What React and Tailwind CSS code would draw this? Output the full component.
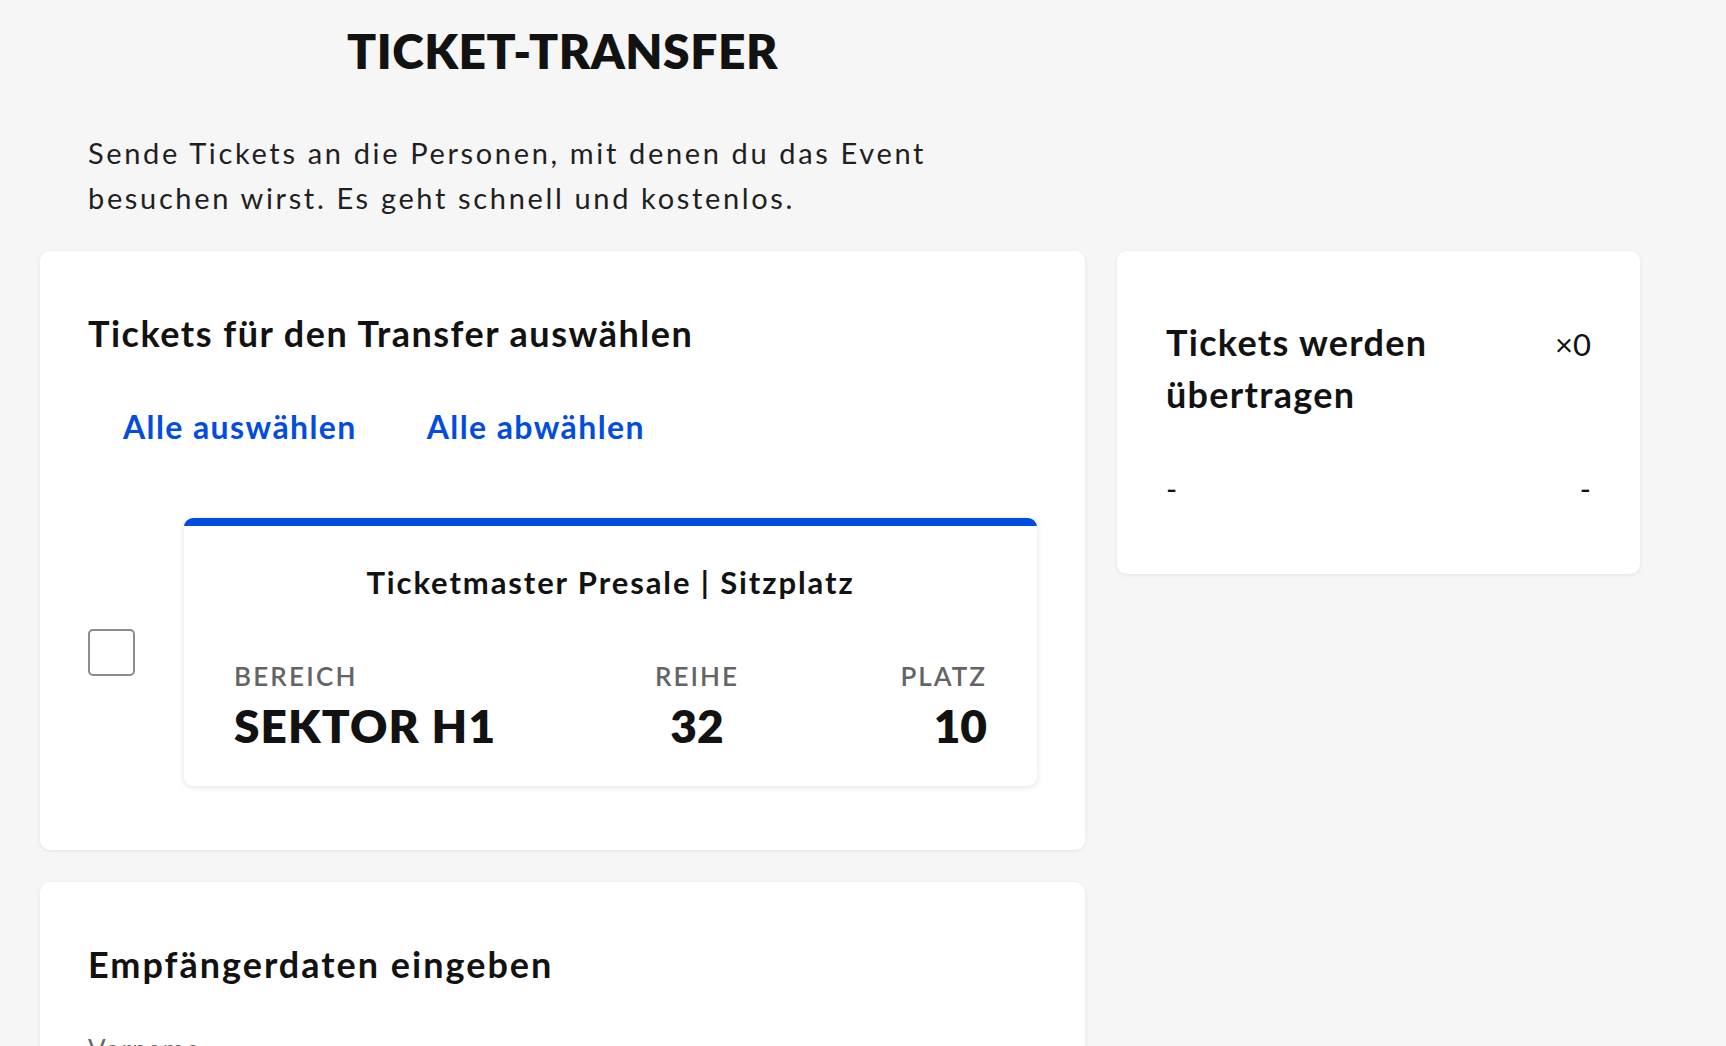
import React from "react";

export default function App() {
  return (
    <div
      className="min-h-screen w-full bg-[#f6f6f6] text-[#121212] overflow-hidden"
      style={{ fontFamily: "Lato, 'Open Sans', sans-serif" }}
    >
      <div className="pl-[40px] pt-[27px]">
        <div className="flex gap-[32px] items-start">
          {/* Left column */}
          <div className="w-[1045px] flex flex-col">
            <h1 className="text-center text-[48px] leading-[48px] font-extrabold tracking-[0.5px] uppercase">
              Ticket-Transfer
            </h1>
            <p className="mt-[55px] pl-[48px] text-[29px] leading-[45px] tracking-[2.65px] text-[#1f1f1f] whitespace-nowrap">
              Sende Tickets an die Personen, mit denen du das Event
              <br />
              besuchen wirst. Es geht schnell und kostenlos.
            </p>

            {/* Card 1 */}
            <div className="mt-[31px] bg-white rounded-[10px] shadow-[0_1px_4px_rgba(0,0,0,0.08)] px-[48px] pt-[58px] pb-[64px]">
              <h2 className="text-[36px] leading-[48px] font-bold tracking-[1.5px] whitespace-nowrap">
                Tickets für den Transfer auswählen
              </h2>
              <div className="mt-[48px] flex">
                <button className="px-[35px] text-[32px] leading-[44px] font-bold tracking-[1.4px] text-[#024ddf]">
                  Alle auswählen
                </button>
                <button className="px-[35px] text-[32px] leading-[44px] font-bold tracking-[1.4px] text-[#024ddf]">
                  Alle abwählen
                </button>
              </div>

              <div className="mt-[69px] flex items-center gap-[49px]">
                <div className="w-[47px] h-[47px] shrink-0 rounded-[5px] border-[2px] border-[#8c8c8c] bg-white" />
                <div className="flex-1 bg-white rounded-[9px] shadow-[0_1px_6px_rgba(0,0,0,0.12)] overflow-hidden">
                  <div className="h-[8px] bg-[#024ddf]" />
                  <div className="px-[50px] pt-[36px] pb-[33px]">
                    <div className="text-center text-[31px] leading-[40px] font-bold tracking-[1.9px] whitespace-nowrap">
                      Ticketmaster Presale | Sitzplatz
                    </div>
                    <div className="mt-[58px] flex">
                      <div className="w-[400px] flex flex-col">
                        <span className="text-[26px] leading-[32px] font-semibold tracking-[2.2px] text-[#646464] uppercase">
                          Bereich
                        </span>
                        <span className="mt-[7px] text-[46px] leading-[54px] font-extrabold tracking-[1.1px] whitespace-nowrap">
                          SEKTOR H1
                        </span>
                      </div>
                      <div className="w-[126px] flex flex-col items-center">
                        <span className="text-[26px] leading-[32px] font-semibold tracking-[2px] text-[#646464] uppercase">
                          Reihe
                        </span>
                        <span className="mt-[7px] text-[46px] leading-[54px] font-extrabold">
                          32
                        </span>
                      </div>
                      <div className="flex-1 flex flex-col items-end">
                        <span className="text-[26px] leading-[32px] font-semibold tracking-[2px] text-[#646464] uppercase">
                          Platz
                        </span>
                        <span className="mt-[7px] text-[46px] leading-[54px] font-extrabold">
                          10
                        </span>
                      </div>
                    </div>
                  </div>
                </div>
              </div>
            </div>

            {/* Card 3 */}
            <div className="mt-[32px] bg-white rounded-[10px] shadow-[0_1px_4px_rgba(0,0,0,0.08)] px-[48px] pt-[58px] pb-[40px]">
              <h2 className="text-[36px] leading-[48px] font-bold tracking-[2px] whitespace-nowrap">
                Empfängerdaten eingeben
              </h2>
              <div className="mt-[45px] text-[26px] leading-[32px] tracking-[1.5px] text-[#646464]">
                Vorname
              </div>
            </div>
          </div>

          {/* Right column */}
          <div className="mt-[224px] w-[523px] bg-white rounded-[10px] shadow-[0_1px_4px_rgba(0,0,0,0.08)] px-[49px] pt-[65px] pb-[66px]">
            <div className="flex justify-between items-baseline">
              <h2 className="text-[36px] leading-[52px] font-bold tracking-[1.3px]">
                Tickets werden
                <br />
                übertragen
              </h2>
              <span className="text-[31px] leading-[40px]">×0</span>
            </div>
            <div className="mt-[48px] flex justify-between text-[30px] leading-[40px]">
              <span>-</span>
              <span>-</span>
            </div>
          </div>
        </div>
      </div>
    </div>
  );
}
